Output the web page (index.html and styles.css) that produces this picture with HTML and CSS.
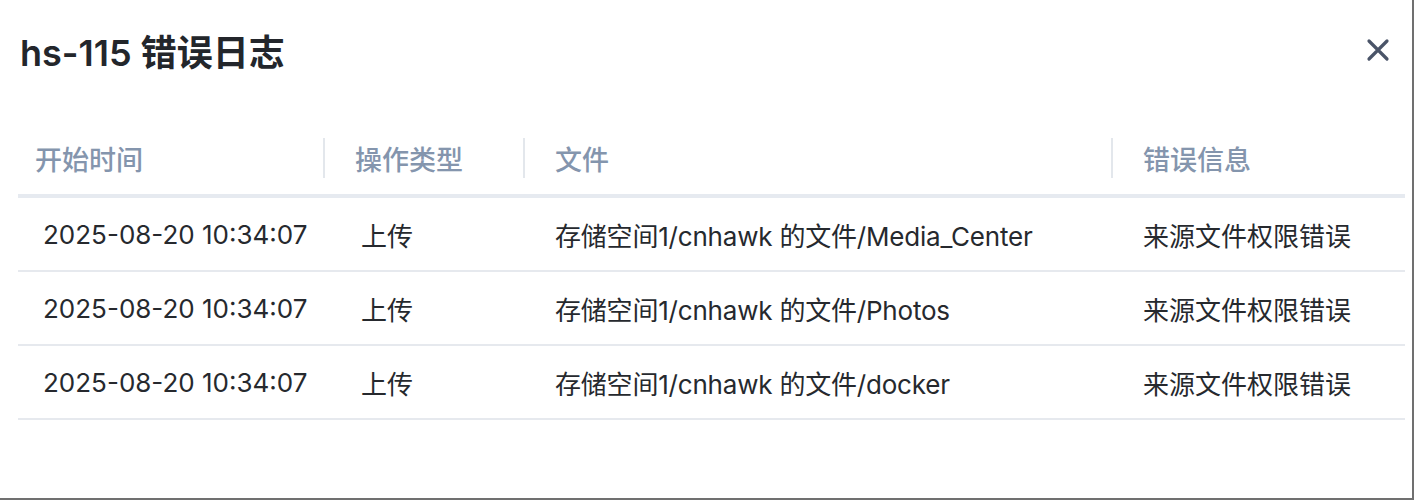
FILE: index.html
```html
<!DOCTYPE html>
<html lang="zh-CN">
<head>
<meta charset="utf-8">
<title>hs-115 错误日志</title>
<link rel="stylesheet" href="styles.css">
</head>
<body>
<div class="dialog">
  <div class="dialog-head">
    <h1 class="title">hs-115 错误日志</h1>
    <button class="close" aria-label="关闭">
      <svg width="24" height="24" viewBox="0 0 24 24"><path d="M3 3 L21 21 M21 3 L3 21" stroke="#4a5468" stroke-width="3.2" stroke-linecap="round" fill="none"/></svg>
    </button>
  </div>
  <table class="log">
    <colgroup>
      <col class="c1"><col class="c2"><col class="c3"><col class="c4">
    </colgroup>
    <thead>
      <tr>
        <th class="first">开始时间</th>
        <th><span class="sep"></span>操作类型</th>
        <th><span class="sep"></span>文件</th>
        <th><span class="sep"></span>错误信息</th>
      </tr>
    </thead>
    <tbody>
      <tr>
        <td class="time">2025-08-20 10:34:07</td>
        <td class="op">上传</td>
        <td class="path">存储空间1/cnhawk 的文件/Media_Center</td>
        <td>来源文件权限错误</td>
      </tr>
      <tr>
        <td class="time">2025-08-20 10:34:07</td>
        <td class="op">上传</td>
        <td class="path">存储空间1/cnhawk 的文件/Photos</td>
        <td>来源文件权限错误</td>
      </tr>
      <tr>
        <td class="time">2025-08-20 10:34:07</td>
        <td class="op">上传</td>
        <td class="path">存储空间1/cnhawk 的文件/docker</td>
        <td>来源文件权限错误</td>
      </tr>
    </tbody>
  </table>
</div>
</body>
</html>
```
FILE: styles.css
```css
html, body {
  margin: 0;
  padding: 0;
  background: #ffffff;
}
.dialog {
  width: 1414px;
  height: 500px;
  box-sizing: border-box;
  border-right: 2px solid #707070;
  border-bottom: 2px solid #707070;
  font-family: "Inter", "Noto Sans CJK SC", sans-serif;
  color: #262a30;
  overflow: hidden;
}
.dialog-head {
  display: flex;
  align-items: center;
  justify-content: space-between;
  height: 100px;
  padding: 0 22px 0 20px;
}
.title {
  margin: 0;
  font-size: 36px;
  font-weight: 600;
  color: #23262b;
  letter-spacing: 0;
}
.close {
  border: 0;
  background: transparent;
  padding: 0;
  width: 24px;
  height: 24px;
  display: flex;
  align-items: center;
  justify-content: center;
}
.log {
  margin: 22px 0 0 18px;
  width: 1387px;
  border-collapse: collapse;
  table-layout: fixed;
  font-size: 26px;
}
.c1 { width: 305px; }
.c2 { width: 200px; }
.c3 { width: 588px; }
.c4 { width: 294px; }
.log th {
  position: relative;
  height: 72px;
  padding: 0 0 0 32px;
  text-align: left;
  font-weight: 500;
  font-size: 27px;
  color: #8495ad;
  border-bottom: 4px solid #e6eaf0;
}
.log th.first {
  padding-left: 17px;
}
.sep {
  position: absolute;
  left: 0;
  top: 16px;
  width: 2px;
  height: 40px;
  background: #e3e7ec;
}
.log td {
  height: 71px;
  padding: 1px 0 0 32px;
  border-bottom: 2px solid #e6e9ee;
  white-space: nowrap;
  color: #26292e;
}
.log td.time {
  padding-left: 25px;
}
.log td.op {
  padding-left: 38px;
}
.log td.path {
  letter-spacing: -0.2px;
}
```
